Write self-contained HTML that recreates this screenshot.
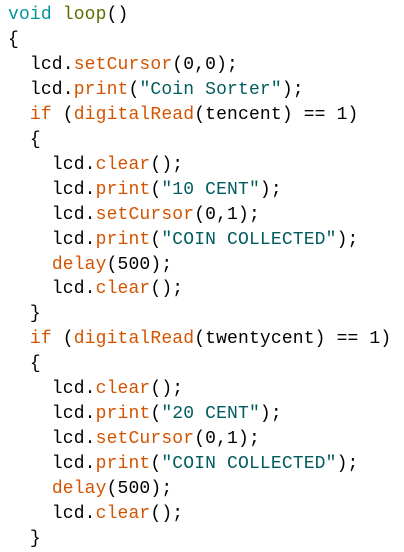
<!DOCTYPE html>
<html><head><meta charset="utf-8"><style>
html,body{margin:0;padding:0;background:#fff;width:404px;height:552px;overflow:hidden}
pre{margin:0;padding:3px 0 0 8px;font-family:"Liberation Mono","Courier New",monospace;font-size:18px;line-height:24.95px;letter-spacing:0.15px;color:#000}
.k{color:#00979c}.f{color:#5e6d03}.o{color:#d35400}.s{color:#005c5f}
</style></head><body><pre><span class="k">void</span> <span class="f">loop</span>()
{
  lcd.<span class="o">setCursor</span>(0,0);
  lcd.<span class="o">print</span>(<span class="s">"Coin Sorter"</span>);
  <span class="o">if</span> (<span class="o">digitalRead</span>(tencent) == 1)
  {
    lcd.<span class="o">clear</span>();
    lcd.<span class="o">print</span>(<span class="s">"10 CENT"</span>);
    lcd.<span class="o">setCursor</span>(0,1);
    lcd.<span class="o">print</span>(<span class="s">"COIN COLLECTED"</span>);
    <span class="o">delay</span>(500);
    lcd.<span class="o">clear</span>();
  }
  <span class="o">if</span> (<span class="o">digitalRead</span>(twentycent) == 1)
  {
    lcd.<span class="o">clear</span>();
    lcd.<span class="o">print</span>(<span class="s">"20 CENT"</span>);
    lcd.<span class="o">setCursor</span>(0,1);
    lcd.<span class="o">print</span>(<span class="s">"COIN COLLECTED"</span>);
    <span class="o">delay</span>(500);
    lcd.<span class="o">clear</span>();
  }</pre></body></html>
